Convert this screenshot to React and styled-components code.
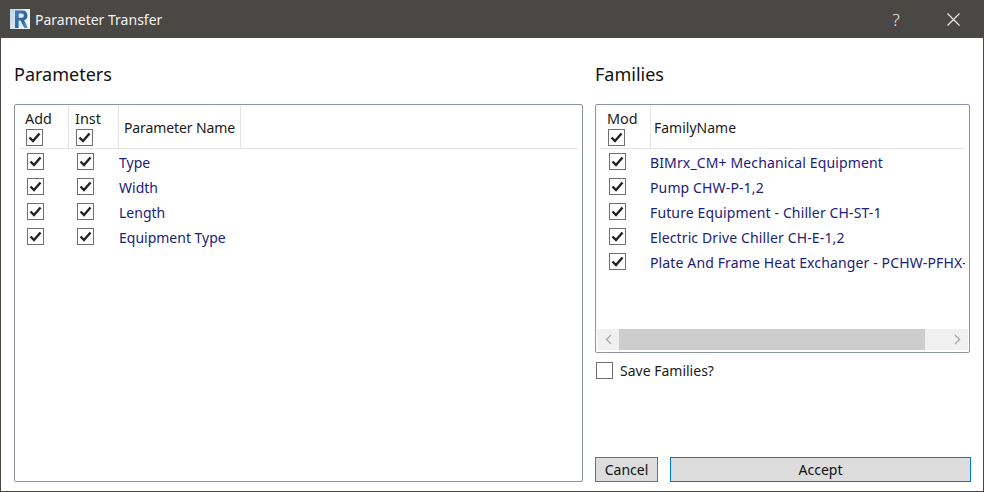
import React from 'react';
import styled, { createGlobalStyle } from 'styled-components';

const GlobalStyle = createGlobalStyle`
  html, body {
    margin: 0;
    padding: 0;
    background: #ffffff;
  }
  body {
    font-family: "Noto Sans", "Open Sans", "Liberation Sans", sans-serif;
    color: #1a1a1a;
  }
`;

const Window = styled.div`
  box-sizing: border-box;
  width: 984px;
  height: 492px;
  border: 1px solid #4a4845;
  border-top: 0;
  display: flex;
  flex-direction: column;
  background: #ffffff;
`;

const TitleBar = styled.div`
  height: 38px;
  flex: none;
  margin: 0 -1px;
  background: #4a4845;
  display: flex;
  align-items: center;
  padding-left: 10px;
  color: #f2f2f2;
  font-size: 14px;
`;

const TitleText = styled.span`
  margin-left: 5px;
  flex: 1;
`;

const HelpButton = styled.span`
  width: 46px;
  text-align: center;
  font-size: 17px;
  font-weight: 300;
  margin-right: 11px;
`;

const CloseButton = styled.span`
  width: 46px;
  margin-right: 8px;
  display: flex;
  justify-content: center;
`;

const Content = styled.div`
  flex: 1;
  display: grid;
  grid-template-columns: 569px 376px;
  column-gap: 12px;
  padding: 0 12px 9px 13px;
  min-height: 0;
`;

const Column = styled.div`
  display: flex;
  flex-direction: column;
  min-height: 0;
`;

const Heading = styled.h2`
  margin: 0;
  height: 66px;
  padding-top: 24px;
  box-sizing: border-box;
  font-size: 18px;
  line-height: 25px;
  font-weight: 400;
  color: #111111;
`;

const ListBox = styled.div`
  box-sizing: border-box;
  border: 1px solid #8f95a0;
  border-radius: 2px;
  padding: 1px 4px 1px 4px;
  display: flex;
  flex-direction: column;
  overflow: hidden;
  width: ${(p) => p.$width};
  height: ${(p) => p.$height};
`;

const HeaderRow = styled.div`
  display: flex;
  height: 42px;
  flex: none;
  border-bottom: 1px solid #e4e4e4;
`;

const CheckHeader = styled.div`
  box-sizing: border-box;
  width: ${(p) => p.$width}px;
  border-right: 1px solid #e4e4e4;
  padding-left: ${(p) => p.$pad}px;
  font-size: 14.4px;
  line-height: 16px;
  padding-top: 5px;
  display: flex;
  flex-direction: column;
  align-items: flex-start;
  gap: 2px;

  & > span:last-child {
    margin-left: 1px;
  }
`;

const HeaderLabel = styled.span`
  display: block;
`;

const NameHeader = styled.div`
  box-sizing: border-box;
  padding-left: ${(p) => p.$pad}px;
  width: ${(p) => p.$width}px;
  letter-spacing: ${(p) => p.$tracking || 0}px;
  border-right: ${(p) => (p.$divider ? '1px solid #e4e4e4' : '0')};
  display: flex;
  align-items: center;
  white-space: nowrap;
  font-size: 14px;
  color: #1a1a1a;
`;

const Rows = styled.div`
  flex: 1;
  min-height: 0;
`;

const Row = styled.div`
  height: 25px;
  display: flex;
  align-items: center;
  white-space: nowrap;
  overflow: hidden;
`;

const CheckCell = styled.div`
  width: ${(p) => p.$width}px;
  flex: none;
  display: flex;
  padding-left: ${(p) => p.$pad}px;
  box-sizing: border-box;
`;

const NameCell = styled.span`
  font-size: 14px;
  margin-top: 2px;
  color: #1c2178;
  letter-spacing: ${(p) => p.$tracking || 0}px;
`;

const Box = styled.span`
  box-sizing: border-box;
  width: 17px;
  height: 17px;
  flex: none;
  border: 1px solid #707070;
  background: #ffffff;
  display: flex;
  align-items: center;
  justify-content: center;
`;

const ScrollBar = styled.div`
  height: 21px;
  flex: none;
  margin: auto -3px 1px -3px;
  background: #f0f0f0;
  display: flex;
  align-items: center;
`;

const ScrollArrow = styled.span`
  width: 22px;
  flex: none;
  display: flex;
  justify-content: center;
`;

const ScrollThumb = styled.span`
  width: 306px;
  height: 21px;
  background: #cdcdcd;
`;

const ScrollTrack = styled.span`
  flex: 1;
`;

const SaveRow = styled.label`
  display: flex;
  align-items: center;
  gap: 7px;
  height: 16px;
  margin: 9px 0 0 1px;
  font-size: 14px;
`;

const Buttons = styled.div`
  margin-top: auto;
  display: flex;
  gap: 12px;
  width: 376px;
`;

const Button = styled.button`
  box-sizing: border-box;
  height: 25px;
  padding: 0;
  font: inherit;
  font-size: 14px;
  line-height: 23px;
  color: #111111;
  background: #dddddd;
  border: 1px solid ${(p) => (p.$primary ? '#0078d7' : '#707070')};
  width: ${(p) => (p.$primary ? '301px' : '63px')};
`;

const Check = () => (
  <svg width="13" height="11" viewBox="0 0 13 11">
    <path d="M1.5 5.5 L5 9 L11.5 1.5" fill="none" stroke="#222" strokeWidth="2.4" />
  </svg>
);

const CheckBox = ({ checked = true }) => <Box>{checked && <Check />}</Box>;

const RevitLogo = () => (
  <svg width="20" height="20" viewBox="0 0 20 20">
    <defs>
      <linearGradient id="revitBg" x1="0" y1="0" x2="1" y2="0.4">
        <stop offset="0" stopColor="#bcd2e6" />
        <stop offset="1" stopColor="#f4f8fb" />
      </linearGradient>
      <linearGradient id="revitR" x1="0" y1="0" x2="1" y2="1">
        <stop offset="0" stopColor="#3f7fb8" />
        <stop offset="0.6" stopColor="#2a659e" />
        <stop offset="1" stopColor="#5ba6d8" />
      </linearGradient>
    </defs>
    <rect width="20" height="20" fill="url(#revitBg)" />
    <path d="M5 1.5h7.5a5 5 0 0 1 1.6 9.7L18 19h-3.8l-3.6-7.4H8.6V19H5z M8.6 4.6v4.2h3.2a2.1 2.1 0 0 0 0-4.2z" fill="url(#revitR)" fillRule="evenodd" />
  </svg>
);

const params = ['Type', 'Width', 'Length', 'Equipment Type'];
const families = [
  'BIMrx_CM+ Mechanical Equipment',
  'Pump CHW-P-1,2',
  'Future Equipment - Chiller CH-ST-1',
  'Electric Drive Chiller CH-E-1,2',
  'Plate And Frame Heat Exchanger - PCHW-PFHX-1',
];

export default function App() {
  return (
    <>
      <GlobalStyle />
      <Window>
        <TitleBar>
          <RevitLogo />
          <TitleText>Parameter Transfer</TitleText>
          <HelpButton>?</HelpButton>
          <CloseButton>
            <svg width="13" height="13" viewBox="0 0 13 13">
              <path d="M0.5 0.5 L12.5 12.5 M12.5 0.5 L0.5 12.5" stroke="#f2f2f2" strokeWidth="1.1" fill="none" />
            </svg>
          </CloseButton>
        </TitleBar>
        <Content>
          <Column>
            <Heading>Parameters</Heading>
            <ListBox $height="378px" $width="569px">
              <HeaderRow>
                <CheckHeader $width={50} $pad={6}>
                  <HeaderLabel>Add</HeaderLabel>
                  <CheckBox />
                </CheckHeader>
                <CheckHeader $width={50} $pad={6}>
                  <HeaderLabel>Inst</HeaderLabel>
                  <CheckBox />
                </CheckHeader>
                <NameHeader $width={122} $pad={5} $tracking={-0.1} $divider>Parameter Name</NameHeader>
              </HeaderRow>
              <Rows>
                {params.map((name) => (
                  <Row key={name}>
                    <CheckCell $width={50} $pad={8}><CheckBox /></CheckCell>
                    <CheckCell $width={50} $pad={8}><CheckBox /></CheckCell>
                    <NameCell>{name}</NameCell>
                  </Row>
                ))}
              </Rows>
            </ListBox>
          </Column>
          <Column>
            <Heading>Families</Heading>
            <ListBox $height="249px" $width="375px">
              <HeaderRow>
                <CheckHeader $width={51} $pad={7}>
                  <HeaderLabel>Mod</HeaderLabel>
                  <CheckBox />
                </CheckHeader>
                <NameHeader $width={120} $pad={3}>FamilyName</NameHeader>
              </HeaderRow>
              <Rows>
                {families.map((name) => (
                  <Row key={name}>
                    <CheckCell $width={50} $pad={9}><CheckBox /></CheckCell>
                    <NameCell $tracking={0.13}>{name}</NameCell>
                  </Row>
                ))}
              </Rows>
              <ScrollBar>
                <ScrollArrow>
                  <svg width="7" height="11" viewBox="0 0 7 11"><path d="M6 1 L1.5 5.5 L6 10" fill="none" stroke="#a6a6a6" strokeWidth="1.3" /></svg>
                </ScrollArrow>
                <ScrollThumb />
                <ScrollTrack />
                <ScrollArrow>
                  <svg width="7" height="11" viewBox="0 0 7 11"><path d="M1 1 L5.5 5.5 L1 10" fill="none" stroke="#a6a6a6" strokeWidth="1.3" /></svg>
                </ScrollArrow>
              </ScrollBar>
            </ListBox>
            <SaveRow>
              <CheckBox checked={false} />
              Save Families?
            </SaveRow>
            <Buttons>
              <Button>Cancel</Button>
              <Button $primary>Accept</Button>
            </Buttons>
          </Column>
        </Content>
      </Window>
    </>
  );
}
